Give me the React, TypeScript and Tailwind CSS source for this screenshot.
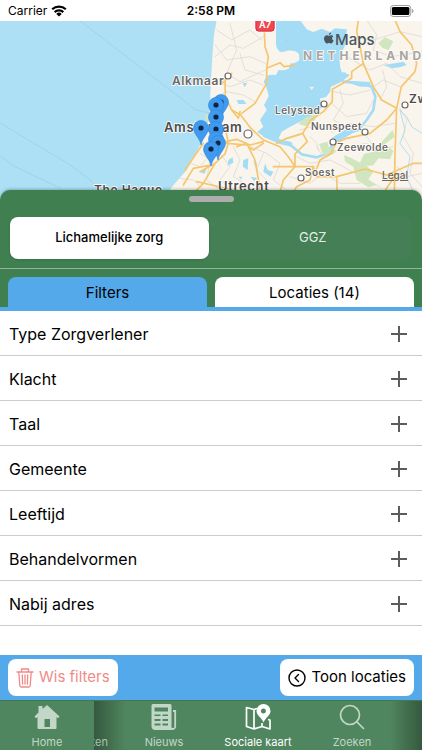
import React, { useState } from "react";

const places = [
  { name: "Alkmaar", x: 172, y: 85, size: 12, color: "#6b6763" },
  { name: "Amsterdam", x: 164, y: 132, size: 13, color: "#504c4a" },
  { name: "The Hague", x: 94, y: 194, size: 12, color: "#504c4a" },
  { name: "Utrecht", x: 218, y: 191, size: 13, color: "#504c4a" },
  { name: "Lelystad", x: 275, y: 114, size: 10, color: "#6b6763" },
  { name: "Nunspeet", x: 311, y: 130, size: 10, color: "#6b6763" },
  { name: "Zeewolde", x: 337, y: 151, size: 10, color: "#6b6763" },
  { name: "Soest", x: 305, y: 176, size: 10, color: "#6b6763" },
  { name: "Zwolle", x: 409, y: 103, size: 12, color: "#504c4a" },
];

const towns = [
  [228, 76, 3],
  [248, 134, 4],
  [324, 104, 3],
  [365, 132, 3],
  [333, 142, 3],
  [301, 178, 3],
  [405, 105, 3],
];

const pins = [
  [221, 102],
  [216, 105],
  [216, 117],
  [216, 129],
  [216, 139],
  [218, 143],
  [211, 149],
  [201, 128],
];

const filters = ["Type Zorgverlener", "Klacht", "Taal", "Gemeente", "Leeftijd", "Behandelvormen", "Nabij adres"];

function StatusBar() {
  return (
    <header className="grid h-[21px] shrink-0 grid-cols-3 items-center bg-white px-2 text-black">
      <div className="flex items-center gap-1 text-xs">
        Carrier
        <svg width="16" height="12" viewBox="0 0 16 12" fill="none" stroke="#000" strokeWidth="2.2" aria-hidden="true">
          <path d="M1.2 4.3a9.8 9.8 0 0 1 13.6 0M3.7 7.1a6.2 6.2 0 0 1 8.6 0" />
          <path d="M8 11.6 5.3 8.9a3.9 3.9 0 0 1 5.4 0Z" fill="#000" stroke="none" />
        </svg>
      </div>
      <div className="text-center text-xs font-semibold">2:58 PM</div>
      <svg className="justify-self-end" width="24" height="12" viewBox="0 0 26 12" preserveAspectRatio="none" aria-hidden="true">
        <rect x="0.5" y="0.5" width="22" height="11" rx="3" fill="#fff" stroke="#999" />
        <rect x="2" y="2" width="19" height="8" rx="1.5" fill="#000" />
        <path d="M24 4v4c1-.3 1.4-1.100 1.400-2s-.4-1.700-1.400-2Z" fill="#999" />
      </svg>
    </header>
  );
}

function MapView() {
  return (
    <section className="relative h-[179px] shrink-0 overflow-hidden bg-[#ade0f5]" aria-label="Kaart">
      <svg className="block h-full w-full" viewBox="0 21 422 179" preserveAspectRatio="xMidYMin slice">
        <g fill="none" stroke="#9fd3ec" strokeWidth="1">
          <path d="M79 20 196 110l14 3M0 123l72 43 28 22M0 156l14 10 48 23" />
        </g>
        <g transform="translate(200 20) scale(.33333)" strokeLinejoin="round" strokeLinecap="round">
          <path fill="#f9f5ed" d="M50 0 42 45 37 110 32 200 28 290 12 350-10 395-40 450-85 502-110 545H670V0Z" />
          <path
            fill="#a5dcf5"
            d="M228 0V75Q232 92 244 97L262 92Q286 90 297 102L298 120Q288 130 272 130L266 146Q250 152 235 150L228 165Q210 163 200 168L191 185 200 205 206 228 192 255 200 270 180 300 190 320 172 336 195 352 235 357 245 335 268 322 300 305 330 290 355 275 365 262 360 235 378 232 390 215 393 200 425 185 450 165 425 155Q415 130 422 105L438 70 440 28 405 25 390 36 365 26 340 36 320 28 300 0Z"
          />
          <path fill="none" stroke="#a5dcf5" strokeWidth="14" d="M195 345 240 365 270 372" />
          <path fill="none" stroke="#a5dcf5" strokeWidth="8" d="M265 370 305 403 350 412 385 400 408 350 440 340 475 330 500 300 520 270 526 230 515 200 480 190 430 185" />
          <path fill="#a5dcf5" d="M395 355 425 335 445 325 470 332 440 350 405 372ZM448 182 510 186 514 200 480 200 450 190ZM130 420 145 415 143 450 128 440ZM160 420 172 432 165 440ZM195 430 203 450 220 455 212 470 190 455ZM85 420 98 412 100 428 82 438ZM152 470 172 474 162 484ZM110 240 130 240 140 252 115 252ZM128 190 142 188 134 202ZM550 135 585 130 610 125 620 135 600 142 575 145ZM430 160 437 155 435 172ZM0 455 20 446 13 462ZM115 470 128 470 122 478Z" />
          <path fill="#f9f5ed" d="M327 197 333 202 342 200 335 210Z" />
          <path
            fill="#cfe6bf"
            d="M295 312 318 292 350 283 345 300 315 318ZM357 372 382 365 387 382 410 392 400 403 370 405ZM432 405 455 415 480 428 492 402 520 395 548 362 578 330 584 350 555 372 580 392 570 418 535 415 520 436 500 438 520 455 505 478 530 495 505 502 470 480 460 440 435 425ZM535 70 555 52 580 64 566 90 548 84ZM15 285 28 280 28 305 16 300ZM240 60 245 60 242 64Z"
          />
          <g fill="none" stroke="#dedad4" strokeWidth="2.500">
            <path d="M50 30 95 60 150 30 185 60M45 110 90 75 130 85 190 50M90 10 110 90 80 160 120 185 195 150M45 75 80 120 150 110 195 130M35 180 90 200 150 180 190 195M30 240 80 215 130 225 165 245M120 100 135 150 190 165" />
            <path d="M450 50 520 60 600 35 666 50M500 0 530 45 520 90 575 110 666 95M440 110 510 150 560 130 600 170 666 190M520 200 550 180 600 200M540 240 560 200 548 150M600 265 620 300 610 350 640 400 630 460 666 500" />
            <path d="M400 215 450 225 510 210M395 250 440 290 500 280 520 240M420 210 430 250 400 300 440 320M300 330 370 310 400 340M330 350 350 370 355 390M250 360 300 345M450 310 520 320 585 310M500 350 530 390 580 380M440 380 500 370 540 400" />
            <path d="M0 400 30 420 20 480 60 510M60 400 90 440 60 480 100 510M100 380 120 420 100 470 150 500M150 380 200 400 240 430 220 480 260 510M190 400 170 450 210 490M290 410 330 430 390 420 430 440 480 470 540 500M270 470 330 490 370 460 420 490 480 490M350 380 370 410 350 440M590 440 620 470 666 460M-60 475-20 480 10 510M-30 430 0 440 25 410" />
          </g>
          <path fill="none" stroke="#b2dcee" strokeWidth="3" d="M666 340 635 320 620 290 600 270M600 270 615 330 600 370 630 410 620 470 640 516" />
          <g fill="none" stroke="#f5c66e" strokeWidth="5">
            <path d="M193 35 195 80 205 110 200 145 200 190 165 250 125 280M200 145 240 128 252 140 285 135M475 0 470 35 480 80 490 130 455 155 455 175 397 208 397 245 370 275 333 300 308 340 260 355 230 370M308 340 322 365 285 402 285 437" />
            <path d="M490 130 520 200 545 240 590 265 560 300 510 340 440 355 410 368M590 265 604 200 645 155 650 130 635 75 600 35 585 0M590 265 585 400 583 535M75 180 76 230 95 270 122 285 150 322 190 360 240 380 265 410 285 440 340 440" />
            <path d="M66 190 75 180 95 160M95 270 115 295 120 275M75 320 85 370 75 402 45 430 0 455M75 365 110 358 150 375 190 365M110 380 140 370 165 420 185 535M80 370 140 375M190 370 160 390 145 380M285 440 250 480 235 535M220 440 280 440M340 440 350 470 410 470 495 447 560 465 640 430 670 430M340 440 330 480 290 500 270 535M410 470 412 535M345 460 360 420 392 402 408 370M540 535 590 460M10 370-45 450M33 435-20 445-50 495M-10 485 35 495 100 510M45 430 10 490-30 530" />
          </g>
        </g>
        <g>
          <rect x="255" y="12" width="20" height="20" rx="3" fill="#ef4650" stroke="#fff" />
          <rect x="256" y="13" width="18" height="18" rx="3" fill="none" stroke="#d83740" />
          <text x="265" y="28" textAnchor="middle" fontSize="9" fontWeight="700" fill="#fff">A7</text>
        </g>
        <text className="tracking-[4px]" x="303" y="60" fontSize="12" fontWeight="700" fill="#aaa5a0" stroke="#fff" strokeWidth="1.500" paintOrder="stroke">
          NETHERLANDS
        </text>
        {places.map((p) => (
          <text key={p.name} className="tracking-wider" x={p.x} y={p.y} fontSize={p.size} fontWeight="600" fill={p.color} stroke="#fff" strokeWidth="1.500" paintOrder="stroke">
            {p.name}
          </text>
        ))}
        <g fill="#fff" stroke="#6b6763" strokeWidth="1.200">
          {towns.map(([x, y, r]) => (
            <circle key={`${x}-${y}`} cx={x} cy={y} r={r} />
          ))}
        </g>
        {pins.map(([x, y]) => (
          <g key={`${x}-${y}`} transform={`translate(${x} ${y})`}>
            <path d="M0 17C-1 10-7.500 6-7.500 0a7.500 7.500 0 0 1 15 0C7.500 6 1 10 0 17Z" fill="#3f9af0" stroke="#2e86dc" strokeWidth=".6" />
            <circle r="2.600" fill="#10263f" />
          </g>
        ))}
        <g fill="#4b5560">
          <path
            transform="translate(323 32) scale(.5)"
            d="M16.400 1c.2 2-1.600 4.800-4.600 4.900C11.500 3.600 13.700 1.300 16.400 1ZM20.500 8.500c-3.400 2.200-2.900 6.900.7 8.500-.9 2.600-2.900 6-5.200 6-1.500 0-2-.9-3.900-.9s-2.500.9-3.900.9C5.200 23 2 17.400 2 13c0-4.200 2.700-6.700 5.600-6.700 1.800 0 3.200 1.200 4.500 1.200 1.200 0 2.900-1.300 5-1.200 1.400.1 2.700.8 3.400 2.200Z"
          />
          <text x="335" y="45" fontSize="15" fontWeight="500">Maps</text>
        </g>
      </svg>
      <a href="#legal" className="absolute right-[14px] bottom-[17px] text-[10px] leading-4 font-medium text-[#6b6763] underline">
        Legal
      </a>
    </section>
  );
}

function HomeIcon() {
  return (
    <svg width="26" height="26" viewBox="0 0 26 26" aria-hidden="true">
      <path fill="currentColor" fillRule="evenodd" d="M13 1 8.500 5V2h-4V8.500L.5 12.500 2 14.200 3.500 13V24a1 1 0 0 0 1 1h17a1 1 0 0 0 1-1V13L24 14.200 25.500 12.500ZM10.500 15v8h5.500v-8Z" />
    </svg>
  );
}

function NewsIcon() {
  return (
    <svg width="26" height="26" viewBox="0 0 26 26" aria-hidden="true">
      <path fill="currentColor" fillRule="evenodd" d="M2 0h17a1.500 1.500 0 0 1 1.500 1.500V22c0 1.500.4 2.600 1.200 4H4.500A4 4 0 0 1 .5 22V1.500A1.500 1.500 0 0 1 2 0Zm1.500 3.500v4H17v-4Zm0 7V12h6v-1.500Zm8 0V12H17v-1.500Zm-8 4.500v2h6v-2Zm8 0v2H17v-2Zm-8 4.500v2h6v-2Zm8 0v2H17v-2Z" />
      <path fill="none" stroke="currentColor" strokeWidth="1.800" d="M22 7h2.200v15.500a2.400 2.400 0 0 1-2.700 2.400H18" />
    </svg>
  );
}

function MapPinIcon() {
  return (
    <svg width="26" height="26" viewBox="0 0 26 26" aria-hidden="true">
      <path fill="none" stroke="currentColor" strokeWidth="1.700" strokeLinejoin="round" d="M12 4.500 9 5.500 1.500 3.500V22.500L9 25l8-2.500 8 2.500V16l-2-.5M9 5.500V25M17 19v3.500" />
      <path fill="currentColor" fillRule="evenodd" d="M18.500 0a7 7 0 0 1 7 7c0 4.500-5 6.500-7 11.500-2-5-7-7-7-11.500a7 7 0 0 1 7-7Zm0 4.500a2.500 2.500 0 1 0 0 5 2.500 2.500 0 0 0 0-5Z" />
    </svg>
  );
}

function SearchIcon() {
  return (
    <svg width="26" height="26" viewBox="0 0 26 26" fill="none" stroke="currentColor" strokeWidth="1.700" strokeLinecap="round" aria-hidden="true">
      <circle cx="11" cy="11" r="9.500" />
      <path d="m18 18 6.500 6.500" />
    </svg>
  );
}

function NavItem({ label, active = false, children }: { label: string; active?: boolean; children: React.ReactNode }) {
  return (
    <button
      type="button"
      className={`flex w-[94px] shrink-0 flex-col items-center gap-1 pt-[3px] text-[11px] leading-4 ${active ? "text-white" : "text-[#c2d7c8]"}`}
    >
      {children}
      <span className="whitespace-nowrap">{label}</span>
    </button>
  );
}

export default function App() {
  const [care, setCare] = useState("zorg");

  return (
    <div className="flex min-h-screen flex-col bg-white font-[Inter,'Noto_Sans',sans-serif] text-black">
      <StatusBar />
      <MapView />
      <main className="relative -mt-[10px] flex flex-1 flex-col">
        <div className="flex flex-col rounded-t-[10px] bg-[#407f4f] shadow-[0_-1px_3px_rgba(0,0,0,0.25)]">
          <div className="mx-auto mt-[6px] h-[6px] w-[45px] rounded-full bg-[#adadad]" />
          <div className="mx-[10px] mt-[14px] mb-[8px] grid grid-cols-2 gap-[5px] rounded-lg bg-[#457f55] text-[13px]">
            <button
              type="button"
              onClick={() => setCare("zorg")}
              aria-pressed={care === "zorg"}
              className={`my-px h-[42px] rounded-lg ${care === "zorg" ? "bg-white font-medium text-black shadow-sm" : "text-white"}`}
            >
              Lichamelijke zorg
            </button>
            <button
              type="button"
              onClick={() => setCare("ggz")}
              aria-pressed={care === "ggz"}
              className={`my-px h-[42px] rounded-lg ${care === "ggz" ? "bg-white font-medium text-black shadow-sm" : "text-[#e4eee7]"}`}
            >
              GGZ
            </button>
          </div>
          <div className="grid grid-cols-2 gap-2 border-t border-[#94b59b] px-2 pt-2 text-[15px]">
            <button type="button" className="h-[30px] rounded-t-lg bg-[#53a9e9] pt-0.5">Filters</button>
            <button type="button" className="h-[30px] rounded-t-lg bg-white pt-0.5">Locaties (14)</button>
          </div>
          <div className="h-1 bg-[#53a9e9]" />
        </div>
        <ul className="flex-1 bg-white">
          {filters.map((f) => (
            <li key={f} className="border-b border-[#cbcbcd]">
              <button type="button" className="flex h-11 w-full items-center justify-between pt-0.5 pr-[14px] pl-[9px] text-left text-base">
                {f}
                <svg width="18" height="18" viewBox="0 0 18 18" stroke="#5c5c5c" strokeWidth="2" aria-hidden="true">
                  <path d="M9 1v16M1 9h16" />
                </svg>
              </button>
            </li>
          ))}
        </ul>
        <div className="flex h-[45px] items-center justify-between bg-[#53a9e9] px-2">
          <button type="button" className="flex h-[37px] items-center gap-[5px] rounded-lg bg-white px-2 text-[15px] text-[#f08a87]">
            <svg width="18" height="20" viewBox="0 0 18 20" fill="none" stroke="currentColor" strokeWidth="1.300" strokeLinecap="round" strokeLinejoin="round" aria-hidden="true">
              <path d="M1 4h16M5.500 4V1h7v3M2.800 4l1 13.500a1.500 1.500 0 0 0 1.500 1.500h7.400a1.500 1.500 0 0 0 1.500-1.500L15.200 4M6.300 7l.3 9M9 7v9M11.700 7l-.3 9" />
            </svg>
            Wis filters
          </button>
          <button type="button" className="flex h-[37px] items-center gap-[5px] rounded-lg bg-white px-2 text-[15px]">
            <svg width="18" height="18" viewBox="0 0 18 18" fill="none" stroke="#000" strokeWidth="1.400" strokeLinecap="round" strokeLinejoin="round" aria-hidden="true">
              <circle cx="9" cy="9" r="8" />
              <path d="M10.500 5.500 7 9l3.500 3.500" />
            </svg>
            Toon locaties
          </button>
        </div>
      </main>
      <nav className="flex h-[50px] shrink-0 overflow-hidden border-t border-[#44794f] bg-[#50865f]">
        <NavItem label="Home">
          <HomeIcon />
        </NavItem>
        <div className="relative flex flex-1 overflow-hidden">
          <div className="pointer-events-none absolute inset-y-0 left-0 w-8 bg-linear-to-r from-[#35593f] to-transparent" />
          <div className="relative flex w-[23px] shrink-0 items-start justify-end overflow-hidden pt-[33px] pr-[9px] text-[11px] leading-4 text-[#a9c2b0]">ken</div>
          <NavItem label="Nieuws">
            <NewsIcon />
          </NavItem>
          <NavItem label="Sociale kaart" active>
            <MapPinIcon />
          </NavItem>
          <NavItem label="Zoeken">
            <SearchIcon />
          </NavItem>
          <div className="pointer-events-none absolute inset-y-0 right-0 w-8 bg-linear-to-l from-[#35593f] to-transparent" />
        </div>
      </nav>
    </div>
  );
}
